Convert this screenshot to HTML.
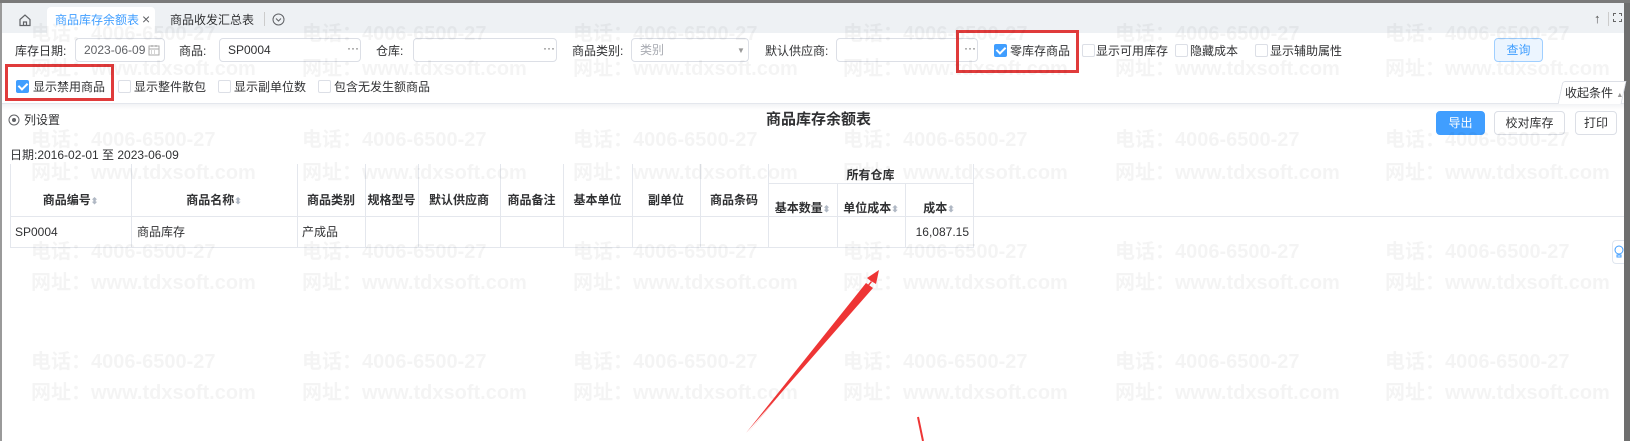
<!DOCTYPE html>
<html><head><meta charset="utf-8">
<style>
*{box-sizing:border-box;margin:0;padding:0}
body{width:1630px;height:441px;overflow:hidden;position:relative;background:#fff;font-family:"Liberation Sans","Noto Sans CJK SC",sans-serif;font-size:12px;color:#303133}
.a{position:absolute;white-space:nowrap;line-height:16px}
.inp{position:absolute;border:1px solid #dcdfe6;border-radius:4px;background:#fff;height:24px;line-height:22px;padding-left:8px;color:#606266}
.cb{position:absolute;width:13px;height:13px;border:1px solid #dcdfe6;border-radius:2px;background:#fff}
.cb.on{background:#409eff;border-color:#409eff}
.cb.on:after{content:"";position:absolute;left:3px;top:0px;width:4px;height:7px;border:solid #fff;border-width:0 2px 2px 0;transform:rotate(45deg)}
.btn{position:absolute;height:24px;line-height:22px;text-align:center;border:1px solid #dcdfe6;border-radius:4px;background:#fff;color:#303133}
.vl{position:absolute;width:1px;background:#e4e7ed}
.hl{position:absolute;height:1px;background:#e4e7ed}
.th{position:absolute;font-weight:bold;text-align:center;color:#303133;line-height:16px}
.s{color:#b0b8c4;font-size:9px}
.wm{position:absolute;white-space:nowrap;color:rgba(0,0,0,0.045);font-weight:bold;font-size:20px;line-height:24px;font-family:"Liberation Sans","Noto Sans CJK SC",sans-serif;pointer-events:none;z-index:50}
</style></head><body>
<div class="a" style="left:0;top:0;width:1630px;height:3px;background:#7a7a7a"></div>
<div class="a" style="left:0;top:3px;width:2px;height:438px;background:#9a9a9a"></div>
<div class="a" style="left:1624px;top:3px;width:6px;height:438px;background:#6e6e6e"></div>
<div class="a" style="left:2px;top:3px;width:1622px;height:30px;background:#eef1f4"></div>
<svg class="a" style="left:18px;top:13px" width="14" height="14" viewBox="0 0 14 14"><path d="M2 6.5L7 2l5 4.5V12.5H2z M5.5 12.5V9h3v3.5" fill="none" stroke="#606266" stroke-width="1.2"/></svg>
<div class="a" style="left:47px;top:7px;width:108px;height:26px;background:#fff;border-radius:4px 4px 0 0"></div>
<div class="a" style="left:55px;top:12px;font-size:12px;color:#409eff">商品库存余额表</div>
<div class="a" style="left:142px;top:11px;font-size:14px;color:#606266">×</div>
<div class="a" style="left:170px;top:12px;font-size:12px;color:#303133">商品收发汇总表</div>
<div class="a" style="left:264px;top:12px;width:1px;height:14px;background:#ccc"></div>
<svg class="a" style="left:272px;top:13px" width="13" height="13" viewBox="0 0 13 13"><circle cx="6.5" cy="6.5" r="5.5" fill="none" stroke="#606266"/><path d="M4 5.5l2.5 2.5 2.5-2.5" fill="none" stroke="#606266"/></svg>
<div class="a" style="left:1594px;top:11px;font-size:13px;color:#555">↑</div>
<div class="a" style="left:1608px;top:12px;width:1px;height:14px;background:#ccc"></div>
<div class="a" style="left:1613px;top:13px;width:9px;height:9px;border:1px dashed #666"></div>
<div class="a" style="left:2px;top:33px;width:1622px;height:71px;background:#fff;border-bottom:1px solid #e4e7ed"></div>
<div class="a" style="left:15px;top:43px">库存日期:</div>
<div class="inp" style="left:75px;top:38px;width:90px">2023-06-09</div>
<svg class="a" style="left:148px;top:44px" width="12" height="12" viewBox="0 0 12 12"><rect x="1" y="2" width="10" height="9" fill="none" stroke="#aaa"/><path d="M1 5h10M4 1v2M8 1v2M3 7h1M6 7h1M3 9h1M6 9h1" stroke="#aaa"/></svg>
<div class="a" style="left:179px;top:43px">商品:</div>
<div class="inp" style="left:219px;top:38px;width:142px;color:#303133">SP0004</div>
<div class="a" style="left:347px;top:40px;color:#555">···</div>
<div class="a" style="left:376px;top:43px">仓库:</div>
<div class="inp" style="left:413px;top:38px;width:144px"></div>
<div class="a" style="left:543px;top:40px;color:#555">···</div>
<div class="a" style="left:572px;top:43px">商品类别:</div>
<div class="inp" style="left:631px;top:38px;width:118px;color:#a8abb2">类别</div>
<div class="a" style="left:737px;top:43px;font-size:8px;color:#999">▼</div>
<div class="a" style="left:765px;top:43px">默认供应商:</div>
<div class="inp" style="left:836px;top:38px;width:142px"></div>
<div class="a" style="left:964px;top:40px;color:#555">···</div>
<div class="cb on" style="left:994px;top:44px"></div><div class="a" style="left:1010px;top:43px">零库存商品</div>
<div class="cb" style="left:1082px;top:44px"></div><div class="a" style="left:1096px;top:43px">显示可用库存</div>
<div class="cb" style="left:1175px;top:44px"></div><div class="a" style="left:1190px;top:43px">隐藏成本</div>
<div class="cb" style="left:1255px;top:44px"></div><div class="a" style="left:1270px;top:43px">显示辅助属性</div>
<div class="btn" style="left:1494px;top:38px;width:49px;background:#ecf5ff;border-color:#a0cfff;color:#409eff">查询</div>
<div class="cb on" style="left:16px;top:80px"></div><div class="a" style="left:33px;top:79px">显示禁用商品</div>
<div class="cb" style="left:118px;top:80px"></div><div class="a" style="left:134px;top:79px">显示整件散包</div>
<div class="cb" style="left:218px;top:80px"></div><div class="a" style="left:234px;top:79px">显示副单位数</div>
<div class="cb" style="left:318px;top:80px"></div><div class="a" style="left:334px;top:79px">包含无发生额商品</div>
<div class="a" style="left:1560px;top:81px;width:64px;height:23px;background:#fff;border:1px solid #dcdfe6;border-bottom:none;border-radius:3px 0 0 0;transform:skewX(-12deg)"></div>
<div class="a" style="left:1565px;top:85px;color:#303133">收起条件 <span style="font-size:7px;color:#999">▲</span></div>
<div class="a" style="left:2px;top:104px;width:1622px;height:6px;background:linear-gradient(#f2f3f5,#fff)"></div>
<div class="a" style="left:5px;top:64px;width:109px;height:37px;border:3px solid #e03b3b"></div>
<div class="a" style="left:956px;top:30px;width:123px;height:43px;border:3px solid #e03b3b"></div>
<svg class="a" style="left:8px;top:114px" width="12" height="12" viewBox="0 0 12 12"><circle cx="6" cy="6" r="5" fill="none" stroke="#606266"/><circle cx="6" cy="6" r="2" fill="#606266"/></svg>
<div class="a" style="left:24px;top:112px">列设置</div>
<div class="a" style="left:766px;top:110px;font-size:15px;font-weight:bold;line-height:20px">商品库存余额表</div>
<div class="btn" style="left:1436px;top:111px;width:49px;background:#409eff;border-color:#409eff;color:#fff">导出</div>
<div class="btn" style="left:1494px;top:111px;width:71px">校对库存</div>
<div class="btn" style="left:1575px;top:111px;width:42px">打印</div>
<div class="a" style="left:10px;top:147px">日期:2016-02-01 至 2023-06-09</div>
<div class="hl" style="left:10px;top:216px;width:1614px"></div>
<div class="hl" style="left:768px;top:183px;width:205px"></div>
<div class="hl" style="left:10px;top:247px;width:963px"></div>
<div class="vl" style="left:10px;top:164px;height:84px"></div>
<div class="vl" style="left:131px;top:164px;height:84px"></div>
<div class="vl" style="left:297px;top:164px;height:84px"></div>
<div class="vl" style="left:365px;top:164px;height:84px"></div>
<div class="vl" style="left:418px;top:164px;height:84px"></div>
<div class="vl" style="left:500px;top:164px;height:84px"></div>
<div class="vl" style="left:563px;top:164px;height:84px"></div>
<div class="vl" style="left:632px;top:164px;height:84px"></div>
<div class="vl" style="left:700px;top:164px;height:84px"></div>
<div class="vl" style="left:768px;top:164px;height:84px"></div>
<div class="vl" style="left:837px;top:183px;height:65px"></div>
<div class="vl" style="left:905px;top:183px;height:65px"></div>
<div class="vl" style="left:973px;top:164px;height:84px"></div>
<div class="th" style="left:10px;top:192px;width:121px">商品编号<span class="s">⬍</span></div>
<div class="th" style="left:131px;top:192px;width:166px">商品名称<span class="s">⬍</span></div>
<div class="th" style="left:297px;top:192px;width:68px">商品类别</div>
<div class="th" style="left:365px;top:192px;width:53px">规格型号</div>
<div class="th" style="left:418px;top:192px;width:82px">默认供应商</div>
<div class="th" style="left:500px;top:192px;width:63px">商品备注</div>
<div class="th" style="left:563px;top:192px;width:69px">基本单位</div>
<div class="th" style="left:632px;top:192px;width:68px">副单位</div>
<div class="th" style="left:700px;top:192px;width:68px">商品条码</div>
<div class="th" style="left:768px;top:167px;width:205px">所有仓库</div>
<div class="th" style="left:768px;top:200px;width:69px">基本数量<span class="s">⬍</span></div>
<div class="th" style="left:837px;top:200px;width:68px">单位成本<span class="s">⬍</span></div>
<div class="th" style="left:905px;top:200px;width:68px">成本<span class="s">⬍</span></div>
<div class="a" style="left:15px;top:224px">SP0004</div>
<div class="a" style="left:137px;top:224px">商品库存</div>
<div class="a" style="left:302px;top:224px">产成品</div>
<div class="a" style="left:902px;top:224px;width:67px;text-align:right">16,087.15</div>
<div class="a" style="left:1612px;top:240px;width:12px;height:24px;background:#fff;border:1px solid #e0e6ef;border-right:none;border-radius:4px 0 0 4px"></div>
<svg class="a" style="left:1614px;top:245px" width="10" height="14" viewBox="0 0 10 14"><circle cx="5" cy="5" r="4" fill="none" stroke="#409eff"/><path d="M3 10h4v2H3z" fill="none" stroke="#409eff"/></svg>
<svg class="a" style="left:0;top:0;z-index:60" width="1630" height="441"><path d="M748 433 L872 282 L867 278 L879 270 L876 284 L871 281 Z" fill="#ee3535"/><path d="M746 433 L866 283 L873 288 Z" fill="#ee3535"/><path d="M918 417 L923 441" stroke="#ee3535" stroke-width="2"/></svg>
<div class="wm" style="left:31px;top:22px">电话：4006-6500-27</div><div class="wm" style="left:31px;top:57px">网址：www.tdxsoft.com</div>
<div class="wm" style="left:302px;top:22px">电话：4006-6500-27</div><div class="wm" style="left:302px;top:57px">网址：www.tdxsoft.com</div>
<div class="wm" style="left:573px;top:22px">电话：4006-6500-27</div><div class="wm" style="left:573px;top:57px">网址：www.tdxsoft.com</div>
<div class="wm" style="left:843px;top:22px">电话：4006-6500-27</div><div class="wm" style="left:843px;top:57px">网址：www.tdxsoft.com</div>
<div class="wm" style="left:1115px;top:22px">电话：4006-6500-27</div><div class="wm" style="left:1115px;top:57px">网址：www.tdxsoft.com</div>
<div class="wm" style="left:1385px;top:22px">电话：4006-6500-27</div><div class="wm" style="left:1385px;top:57px">网址：www.tdxsoft.com</div>
<div class="wm" style="left:31px;top:128px">电话：4006-6500-27</div><div class="wm" style="left:31px;top:161px">网址：www.tdxsoft.com</div>
<div class="wm" style="left:302px;top:128px">电话：4006-6500-27</div><div class="wm" style="left:302px;top:161px">网址：www.tdxsoft.com</div>
<div class="wm" style="left:573px;top:128px">电话：4006-6500-27</div><div class="wm" style="left:573px;top:161px">网址：www.tdxsoft.com</div>
<div class="wm" style="left:843px;top:128px">电话：4006-6500-27</div><div class="wm" style="left:843px;top:161px">网址：www.tdxsoft.com</div>
<div class="wm" style="left:1115px;top:128px">电话：4006-6500-27</div><div class="wm" style="left:1115px;top:161px">网址：www.tdxsoft.com</div>
<div class="wm" style="left:1385px;top:128px">电话：4006-6500-27</div><div class="wm" style="left:1385px;top:161px">网址：www.tdxsoft.com</div>
<div class="wm" style="left:31px;top:240px">电话：4006-6500-27</div><div class="wm" style="left:31px;top:271px">网址：www.tdxsoft.com</div>
<div class="wm" style="left:302px;top:240px">电话：4006-6500-27</div><div class="wm" style="left:302px;top:271px">网址：www.tdxsoft.com</div>
<div class="wm" style="left:573px;top:240px">电话：4006-6500-27</div><div class="wm" style="left:573px;top:271px">网址：www.tdxsoft.com</div>
<div class="wm" style="left:843px;top:240px">电话：4006-6500-27</div><div class="wm" style="left:843px;top:271px">网址：www.tdxsoft.com</div>
<div class="wm" style="left:1115px;top:240px">电话：4006-6500-27</div><div class="wm" style="left:1115px;top:271px">网址：www.tdxsoft.com</div>
<div class="wm" style="left:1385px;top:240px">电话：4006-6500-27</div><div class="wm" style="left:1385px;top:271px">网址：www.tdxsoft.com</div>
<div class="wm" style="left:31px;top:350px">电话：4006-6500-27</div><div class="wm" style="left:31px;top:381px">网址：www.tdxsoft.com</div>
<div class="wm" style="left:302px;top:350px">电话：4006-6500-27</div><div class="wm" style="left:302px;top:381px">网址：www.tdxsoft.com</div>
<div class="wm" style="left:573px;top:350px">电话：4006-6500-27</div><div class="wm" style="left:573px;top:381px">网址：www.tdxsoft.com</div>
<div class="wm" style="left:843px;top:350px">电话：4006-6500-27</div><div class="wm" style="left:843px;top:381px">网址：www.tdxsoft.com</div>
<div class="wm" style="left:1115px;top:350px">电话：4006-6500-27</div><div class="wm" style="left:1115px;top:381px">网址：www.tdxsoft.com</div>
<div class="wm" style="left:1385px;top:350px">电话：4006-6500-27</div><div class="wm" style="left:1385px;top:381px">网址：www.tdxsoft.com</div>
</body></html>
